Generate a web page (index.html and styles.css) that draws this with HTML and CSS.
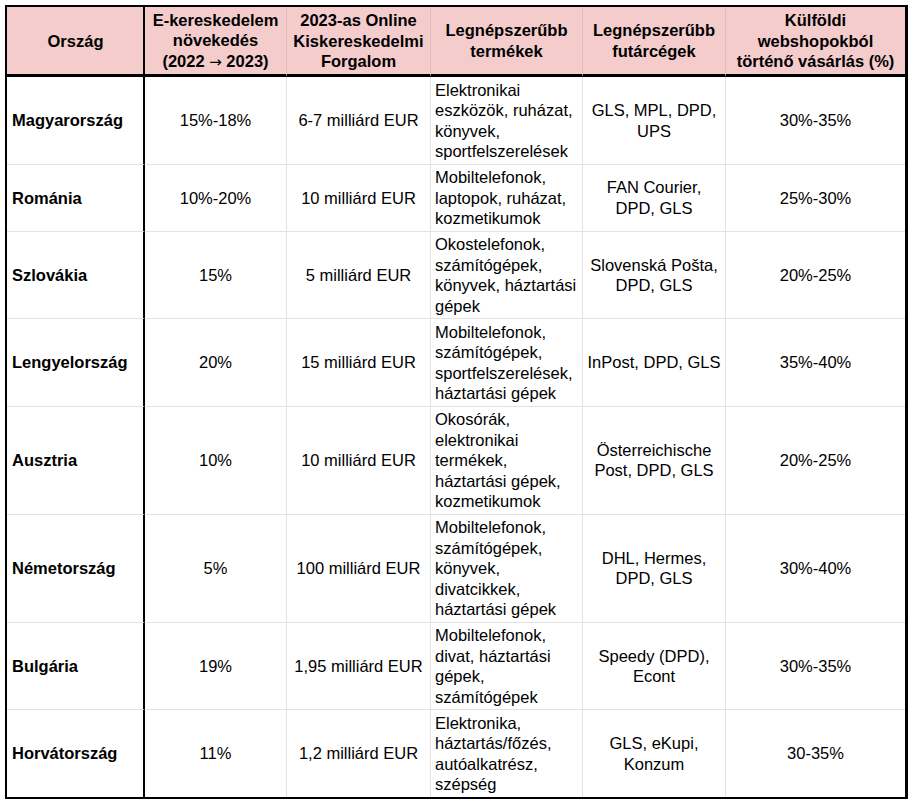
FILE: index.html
```html
<!DOCTYPE html>
<html lang="hu">
<head>
<meta charset="utf-8">
<title>E-kereskedelem</title>
<link rel="stylesheet" href="styles.css">
</head>
<body>
<table class="sheet">
  <colgroup>
    <col class="c1"><col class="c2"><col class="c3"><col class="c4"><col class="c5"><col class="c6">
  </colgroup>
  <thead>
    <tr>
      <th class="first">Ország</th>
      <th>E-kereskedelem növekedés <span class="nowrap">(2022 <span class="arrow">→</span> 2023)</span></th>
      <th>2023-as Online Kiskereskedelmi Forgalom</th>
      <th>Legnépszerűbb termékek</th>
      <th>Legnépszerűbb futárcégek</th>
      <th class="last">Külföldi webshopokból történő vásárlás (%)</th>
    </tr>
  </thead>
  <tbody>
    <tr>
      <td class="first">Magyarország</td>
      <td class="mid">15%-18%</td>
      <td class="mid">6-7 milliárd EUR</td>
      <td>Elektronikai eszközök, ruházat, könyvek, sportfelszerelések</td>
      <td class="mid">GLS, MPL, DPD, UPS</td>
      <td class="mid last">30%-35%</td>
    </tr>
    <tr>
      <td class="first">Románia</td>
      <td class="mid">10%-20%</td>
      <td class="mid">10 milliárd EUR</td>
      <td>Mobiltelefonok, laptopok, ruházat, kozmetikumok</td>
      <td class="mid">FAN Courier, DPD, GLS</td>
      <td class="mid last">25%-30%</td>
    </tr>
    <tr>
      <td class="first">Szlovákia</td>
      <td class="mid">15%</td>
      <td class="mid">5 milliárd EUR</td>
      <td>Okostelefonok, számítógépek, könyvek, háztartási gépek</td>
      <td class="mid">Slovenská Pošta, DPD, GLS</td>
      <td class="mid last">20%-25%</td>
    </tr>
    <tr>
      <td class="first">Lengyelország</td>
      <td class="mid">20%</td>
      <td class="mid">15 milliárd EUR</td>
      <td>Mobiltelefonok, számítógépek, sportfelszerelések, háztartási gépek</td>
      <td class="mid">InPost, DPD, GLS</td>
      <td class="mid last">35%-40%</td>
    </tr>
    <tr>
      <td class="first">Ausztria</td>
      <td class="mid">10%</td>
      <td class="mid">10 milliárd EUR</td>
      <td>Okosórák, elektronikai termékek, háztartási gépek, kozmetikumok</td>
      <td class="mid">Österreichische Post, DPD, GLS</td>
      <td class="mid last">20%-25%</td>
    </tr>
    <tr>
      <td class="first">Németország</td>
      <td class="mid">5%</td>
      <td class="mid">100 milliárd EUR</td>
      <td>Mobiltelefonok, számítógépek, könyvek, divatcikkek, háztartási gépek</td>
      <td class="mid">DHL, Hermes, DPD, GLS</td>
      <td class="mid last">30%-40%</td>
    </tr>
    <tr>
      <td class="first">Bulgária</td>
      <td class="mid">19%</td>
      <td class="mid">1,95 milliárd EUR</td>
      <td>Mobiltelefonok, divat, háztartási gépek, számítógépek</td>
      <td class="mid">Speedy (DPD), Econt</td>
      <td class="mid last">30%-35%</td>
    </tr>
    <tr class="end">
      <td class="first">Horvátország</td>
      <td class="mid">11%</td>
      <td class="mid">1,2 milliárd EUR</td>
      <td>Elektronika, háztartás/főzés, autóalkatrész, szépség</td>
      <td class="mid">GLS, eKupi, Konzum</td>
      <td class="mid last">30-35%</td>
    </tr>
  </tbody>
</table>
</body>
</html>
```

FILE: styles.css
```css
html, body {
  margin: 0;
  padding: 0;
  background: #ffffff;
}

body {
  font-family: "Liberation Sans", Arial, sans-serif;
  font-size: 16.5px;
  color: #000000;
}

.sheet {
  margin: 5px 0 0 5px;
  width: 903px;
  table-layout: fixed;
  border-collapse: separate;
  border-spacing: 0;
  border-top: 2px solid #000;
  border-left: 2px solid #000;
  border-right: 3px solid #000;
  border-bottom: 2px solid #000;
}

.c1 { width: 138px; }
.c2 { width: 142px; }
.c3 { width: 144px; }
.c4 { width: 152px; }
.c5 { width: 143px; }
.c6 { width: 179px; }

.sheet th,
.sheet td {
  padding: 2.5px 4px 2px;
  line-height: 20.5px;
  vertical-align: middle;
  border-right: 1px solid #e2e2e2;
  border-bottom: 1px solid #e2e2e2;
  text-align: left;
}

.sheet th {
  background: #f4cccc;
  font-weight: bold;
  text-align: center;
  border-right-color: #dcc0c0;
  border-bottom: 3px solid #000;
}

.sheet .first {
  border-right: 2px solid #000;
  font-weight: bold;
  padding-left: 5px;
}

.sheet .last {
  border-right: none;
}

.sheet .mid {
  text-align: center;
}

.sheet .end td {
  border-bottom: none;
}

.nowrap {
  white-space: nowrap;
}

.arrow {
  font-family: "DejaVu Sans", sans-serif;
  font-weight: normal;
  font-size: 15px;
}
```
